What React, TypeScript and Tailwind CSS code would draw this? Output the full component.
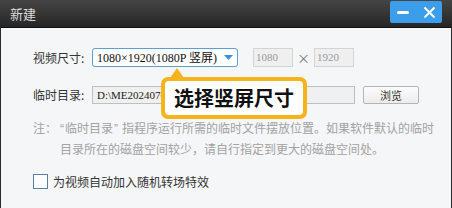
import React from 'react';

const cjk = { fontFamily: '"Noto Sans CJK SC", "Noto Sans", sans-serif' };
const serif = { fontFamily: '"Liberation Serif", "Noto Sans CJK SC", serif' };
const latin = { fontFamily: '"Liberation Sans", sans-serif' };

export default function App() {
  return (
    <div className="w-[452px] h-[208px] overflow-hidden bg-[#2b2b2b]" style={cjk}>
      {/* title bar */}
      <div className="h-[27px] flex items-center justify-between pl-[10px] pr-[10px] bg-gradient-to-b from-[#454545] to-[#262626]">
        <span className="text-[13px] text-[#dcdcdc] leading-none">新建</span>
        <div className="flex items-center h-[22px] w-[52px] rounded-[2px] bg-[#3c9eea] self-start mt-[1px]">
          <div className="w-[26px] flex justify-center">
            <div className="w-[12px] h-[3px] bg-white rounded-sm" />
          </div>
          <div className="w-[26px] flex justify-center">
            <svg width="13" height="13" viewBox="0 0 13 13">
              <path d="M1.5 1.5 L11.5 11.5 M11.5 1.5 L1.5 11.5" stroke="white" strokeWidth="2" />
            </svg>
          </div>
        </div>
      </div>

      {/* body */}
      <div className="relative h-[181px] mx-[1px] border-t border-[#111] bg-[#f5f6f8] pl-[32px] pt-[20px] text-[12px] text-[#333]">
        {/* row 1 */}
        <div className="flex items-center h-[19px]">
          <span className="w-[59px] leading-none">视频尺寸:</span>
          <div className="w-[146px] h-[19px] border border-[#5a9fd6] rounded-[3px] bg-white flex items-center pl-[4px] pr-[4px] justify-between">
            <span className="text-[12px] text-[#111] leading-none" style={serif}>1080×1920(1080P 竖屏)</span>
            <svg width="9" height="6" viewBox="0 0 9 6">
              <path d="M0 0 L9 0 L4.5 5 Z" fill="#3f8fd8" />
            </svg>
          </div>
          <div className="ml-[15px] w-[40px] h-[19px] border border-[#d4d4d4] bg-[#efefef] flex items-center pl-[2px]">
            <span className="text-[11px] text-[#9a9a9a] leading-none" style={serif}>1080</span>
          </div>
          <span className="w-[21px] text-center text-[13px] text-[#777] leading-none">×</span>
          <div className="w-[40px] h-[19px] border border-[#d4d4d4] bg-[#efefef] flex items-center pl-[2px]">
            <span className="text-[11px] text-[#9a9a9a] leading-none" style={serif}>1920</span>
          </div>
        </div>

        {/* row 2 */}
        <div className="flex items-center h-[18px] mt-[19px]">
          <span className="w-[59px] leading-none">临时目录:</span>
          <div className="w-[263px] h-[18px] border border-[#bfbfbf] bg-[#f0f0f0] flex items-center pl-[4px]">
            <span className="text-[11px] text-[#222] leading-none" style={serif}>D:\ME20240705</span>
          </div>
          <button className="ml-[8px] w-[56px] h-[18px] border border-[#b5b5b5] rounded-[2px] bg-gradient-to-b from-[#fdfdfd] to-[#ececec] text-[11px] text-[#333] leading-none">
            浏览
          </button>
        </div>

        {/* note */}
        <div className="mt-[14px] text-[12px] text-[#a3a3a3] leading-[20px]">
          <div className="whitespace-nowrap">
            注：<span className="ml-[3px] mr-[1px]" style={latin}>“</span>临时目录<span className="ml-[1px] mr-[4px]" style={latin}>”</span>指程序运行所需的临时文件摆放位置。如果软件默认的临时
          </div>
          <div className="pl-[27px] whitespace-nowrap">目录所在的磁盘空间较少，请自行指定到更大的磁盘空间处。</div>
        </div>

        {/* checkbox */}
        <div className="flex items-center mt-[15px] gap-[5px]">
          <div className="w-[15px] h-[15px] border border-[#5b7ea6] bg-white" />
          <span className="text-[12px] text-[#333] leading-none">为视频自动加入随机转场特效</span>
        </div>

        {/* callout */}
        <div className="absolute left-[160px] top-[49px] w-[146px] h-[42px] rounded-[7px] bg-[#f5b41c] p-[4px]">
          <svg className="absolute left-[9px] top-[-9px]" width="14" height="10" viewBox="0 0 14 10">
            <path d="M0 10 L7 0 L14 10 Z" fill="#f5b41c" />
          </svg>
          <div className="w-full h-full rounded-[4px] bg-white flex items-center justify-center">
            <span className="text-[20px] font-bold text-[#111] leading-none">选择竖屏尺寸</span>
          </div>
        </div>
      </div>
    </div>
  );
}
